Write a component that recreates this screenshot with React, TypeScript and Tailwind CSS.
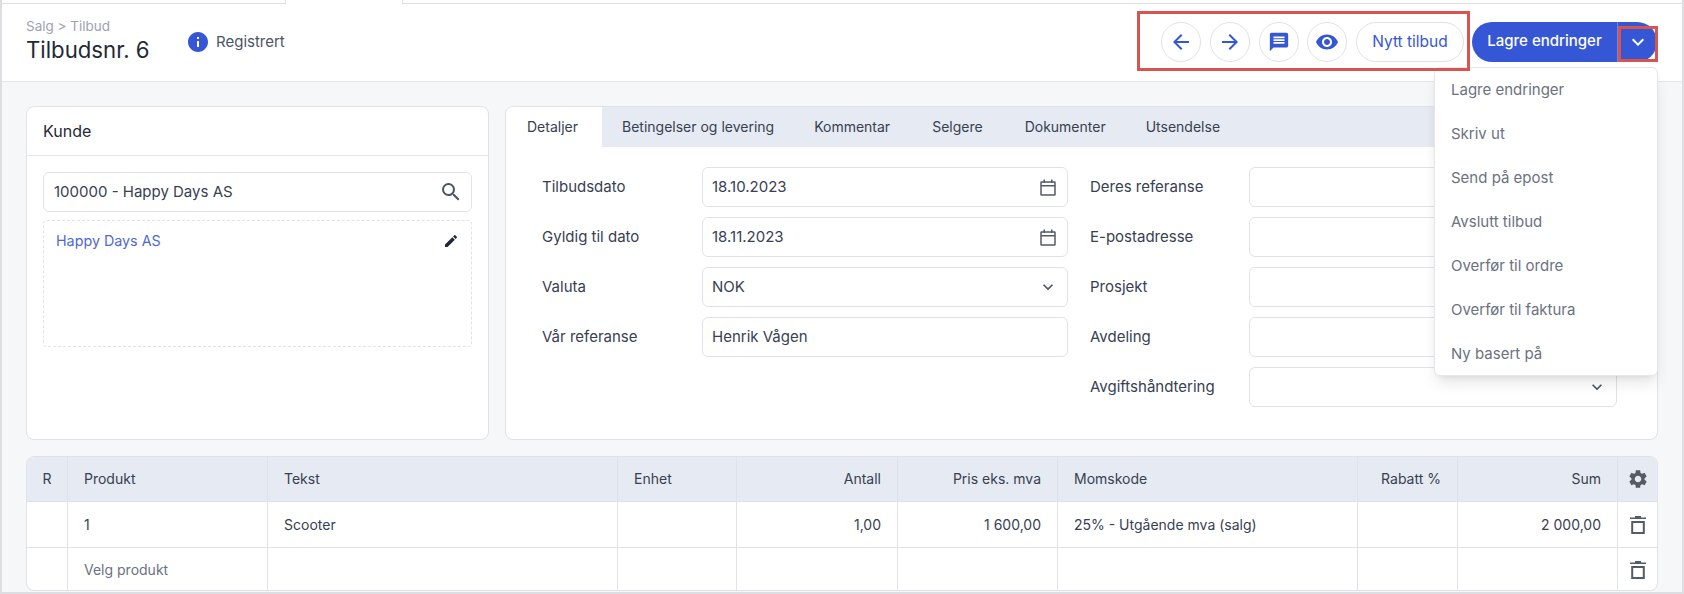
import React from 'react'
import { MdArrowBack, MdArrowForward, MdMessage, MdVisibility, MdInfo, MdSearch, MdEdit, MdKeyboardArrowDown, MdSettings } from 'react-icons/md'

const dropdownItems = ['Lagre endringer', 'Skriv ut', 'Send på epost', 'Avslutt tilbud', 'Overfør til ordre', 'Overfør til faktura', 'Ny basert på']
const tabs = ['Betingelser og levering', 'Kommentar', 'Selgere', 'Dokumenter', 'Utsendelse']

function Field({ label, value, icon, labelClass = 'w-[160px]' }: { label: string; value?: string; icon?: React.ReactNode; labelClass?: string }) {
  return (
    <div className="flex items-center h-10">
      <div className={`${labelClass} shrink-0 text-[15px] text-[#374151]`}>{label}</div>
      <div className="flex-1 h-10 rounded-md border border-[#dfe2e6] bg-white flex items-center justify-between pl-[9px] pr-[11px] text-[15px] text-[#374151]">
        <span>{value}</span>
        {icon}
      </div>
    </div>
  )
}

const calendar = (
  <svg width="16" height="17" viewBox="0 0 16 17" fill="none" stroke="#555b63" strokeWidth="1.5">
    <rect x="1" y="3" width="14" height="13" rx="0.5" />
    <path d="M1 6.8h14M4.2 0.5v3.5M11.8 0.5v3.5" />
  </svg>
)
const chevron = <MdKeyboardArrowDown className="text-[#4b5563] text-xl -mr-[2px]" />

function TrashIcon() {
  return (
    <svg width="24" height="24" viewBox="0 0 24 24" fill="#555b63">
      <path d="M9 3h6v1.5h5v1.6H4V4.5h5z" />
      <path fillRule="evenodd" d="M5.2 8h13.6v13H5.2z M7.2 10v9h9.6v-9z" />
    </svg>
  )
}

function RoundButton({ children }: { children: React.ReactNode }) {
  return (
    <button className="w-10 h-10 rounded-full border border-[#dfe2e6] bg-white flex items-center justify-center text-[#3557d5] text-2xl">
      {children}
    </button>
  )
}

function Cell({ className, children }: { className: string; children?: React.ReactNode }) {
  return <div className={`border-r border-[#dfe2e6] flex items-center px-4 text-sm ${className}`}>{children}</div>
}

function Row({ head, produkt, tekst, antall, pris, moms, sum, last, rowClass }: { head?: boolean; produkt?: React.ReactNode; tekst?: string; antall?: string; pris?: string; moms?: string; sum?: string; last: React.ReactNode; rowClass: string }) {
  return (
    <div className={`flex ${rowClass}`}>
      <Cell className="w-[41px] justify-center px-0">{head ? 'R' : ''}</Cell>
      <Cell className="w-[200px]">{produkt}</Cell>
      <Cell className="w-[350px]">{tekst}</Cell>
      <Cell className="w-[119px]">{head ? 'Enhet' : ''}</Cell>
      <Cell className="w-[161px] justify-end">{antall}</Cell>
      <Cell className="w-[160px] justify-end">{pris}</Cell>
      <Cell className="w-[300px]">{moms}</Cell>
      <Cell className="w-[100px] justify-end">{head ? 'Rabatt %' : ''}</Cell>
      <Cell className="w-[160px] justify-end">{sum}</Cell>
      <div className="flex-1 flex items-center justify-center">{last}</div>
    </div>
  )
}

export default function App() {
  return (
    <div className="relative w-[1684px] h-[594px] overflow-hidden bg-[#f5f7f9] border-x-2 border-b-2 border-[#dcdee1] font-['Inter',sans-serif] text-[#374151]">
      <div className="flex h-[4px] bg-white">
        <div className="w-[283px] border-b border-[#dcdee1]" />
        <div className="w-[118px] border-x border-[#dcdee1]" />
        <div className="flex-1 border-b border-[#dcdee1]" />
      </div>

      <header className="h-[78px] bg-white border-b border-[#e2e5e9] flex items-center justify-between pl-[24px] pr-[25px] pb-[2px]">
        <div className="flex items-center">
          <div className="w-[160px] mb-[4px]">
            <div className="text-[13.5px] leading-5 text-[#9ca3af]">Salg &gt; Tilbud</div>
            <h1 className="text-[22.2px] leading-7 text-[#1f2937]">Tilbudsnr. 6</h1>
          </div>
          <MdInfo className="text-[#3557d5] text-[24px]" />
          <span className="ml-[6px] mt-[2px] text-[15px] text-[#4b5563]">Registrert</span>
        </div>
        <div className="flex items-center">
          <div className="flex items-center gap-[8.7px]">
            <RoundButton><MdArrowBack /></RoundButton>
            <RoundButton><MdArrowForward /></RoundButton>
            <RoundButton><MdMessage className="text-[22px]" /></RoundButton>
            <RoundButton><MdVisibility /></RoundButton>
            <button className="w-[108px] h-10 rounded-full border border-[#dfe2e6] bg-white text-[15.5px] text-[#3557d5]">Nytt tilbud</button>
          </div>
          <div className="ml-2 flex h-10 rounded-full bg-[#3557d5] text-white overflow-hidden">
            <button className="w-[146px] text-[15px] font-medium border-r border-[#6c86e3]">Lagre endringer</button>
            <button className="w-[39px] flex items-center justify-center text-2xl"><MdKeyboardArrowDown /></button>
          </div>
        </div>
      </header>

      <main className="px-[24px] pt-[24px]">
        <div className="flex gap-[16px] h-[334px]">
          <section className="w-[463px] bg-white rounded-lg border border-[#dfe2e6]">
            <div className="h-[49px] px-4 flex items-center text-base text-[#1f2937] border-b border-[#e2e5e9]">Kunde</div>
            <div className="px-4 pt-[16px]">
              <div className="h-10 rounded-md border border-[#dfe2e6] flex items-center justify-between pl-[10px] pr-2 text-[15px] text-[#374151]">
                <span>100000 - Happy Days AS</span>
                <MdSearch className="text-[#4b5563] text-2xl" />
              </div>
              <div className="mt-2 h-[127px] rounded border border-dashed border-[#dfe2e6] px-3 pt-[9px] flex items-start justify-between">
                <span className="text-[14.3px] text-[#4f68d6]">Happy Days AS</span>
                <MdEdit className="text-[#1f2937] text-base mt-[3px]" />
              </div>
            </div>
          </section>

          <section className="flex-1 bg-white rounded-lg border border-[#dfe2e6] overflow-hidden">
            <div className="flex h-[40px] bg-[#e6eaf2] text-sm text-[#374151]">
              <div className="w-[96px] bg-white flex items-center pl-[21px]">Detaljer</div>
              <div className="flex items-center pl-[20px] gap-[40px]">
                {tabs.map(t => <span key={t} className={t === 'Selgere' ? 'mx-[2px]' : ''}>{t}</span>)}
              </div>
            </div>
            <div className="grid grid-cols-[526px_527px] gap-x-[22px] pl-[36px] pt-[20px]">
              <div className="flex flex-col gap-[10px]">
                <Field label="Tilbudsdato" value="18.10.2023" icon={calendar} />
                <Field label="Gyldig til dato" value="18.11.2023" icon={calendar} />
                <Field label="Valuta" value="NOK" icon={chevron} />
                <Field label="Vår referanse" value="Henrik Vågen" />
              </div>
              <div className="flex flex-col gap-[10px]">
                <Field labelClass="w-[159px]" label="Deres referanse" />
                <Field labelClass="w-[159px]" label="E-postadresse" />
                <Field labelClass="w-[159px]" label="Prosjekt" />
                <Field labelClass="w-[159px]" label="Avdeling" />
                <Field labelClass="w-[159px]" label="Avgiftshåndtering" icon={chevron} />
              </div>
            </div>
          </section>
        </div>

        <section className="mt-[16px] rounded-lg border border-[#dfe2e6] bg-white overflow-hidden h-[135px]">
          <Row head produkt="Produkt" tekst="Tekst" antall="Antall" pris="Pris eks. mva" moms="Momskode" sum="Sum" rowClass="h-[45px] bg-[#e6eaf2] border-b border-[#dfe2e6]"
            last={<MdSettings className="text-[#555b63] text-[22px]" />} />
          <Row produkt="1" tekst="Scooter" antall="1,00" pris="1 600,00" moms="25% - Utgående mva (salg)" sum="2 000,00" rowClass="h-[46px] border-b border-[#dfe2e6]"
            last={<TrashIcon />} />
          <Row produkt={<span className="text-[#6b7280]">Velg produkt</span>} rowClass="h-[43px]"
            last={<TrashIcon />} />
        </section>
      </main>

      {/* open dropdown */}
      <div className="absolute left-[1432px] top-[67px] w-[224px] h-[309px] bg-white rounded-md border border-[#e5e7eb] shadow-lg">
        {dropdownItems.map(item => (
          <div key={item} className="h-[44px] flex items-center pl-4 text-[15px] text-[#6b7280]">{item}</div>
        ))}
      </div>

      {/* annotation boxes */}
      <div className="absolute left-[1135px] top-[11px] w-[333px] h-[60px] border-[3px] border-[#d9534f]" />
      <div className="absolute left-[1616px] top-[26px] w-[40px] h-[36px] border-[3px] border-[#d9534f]" />
    </div>
  )
}
